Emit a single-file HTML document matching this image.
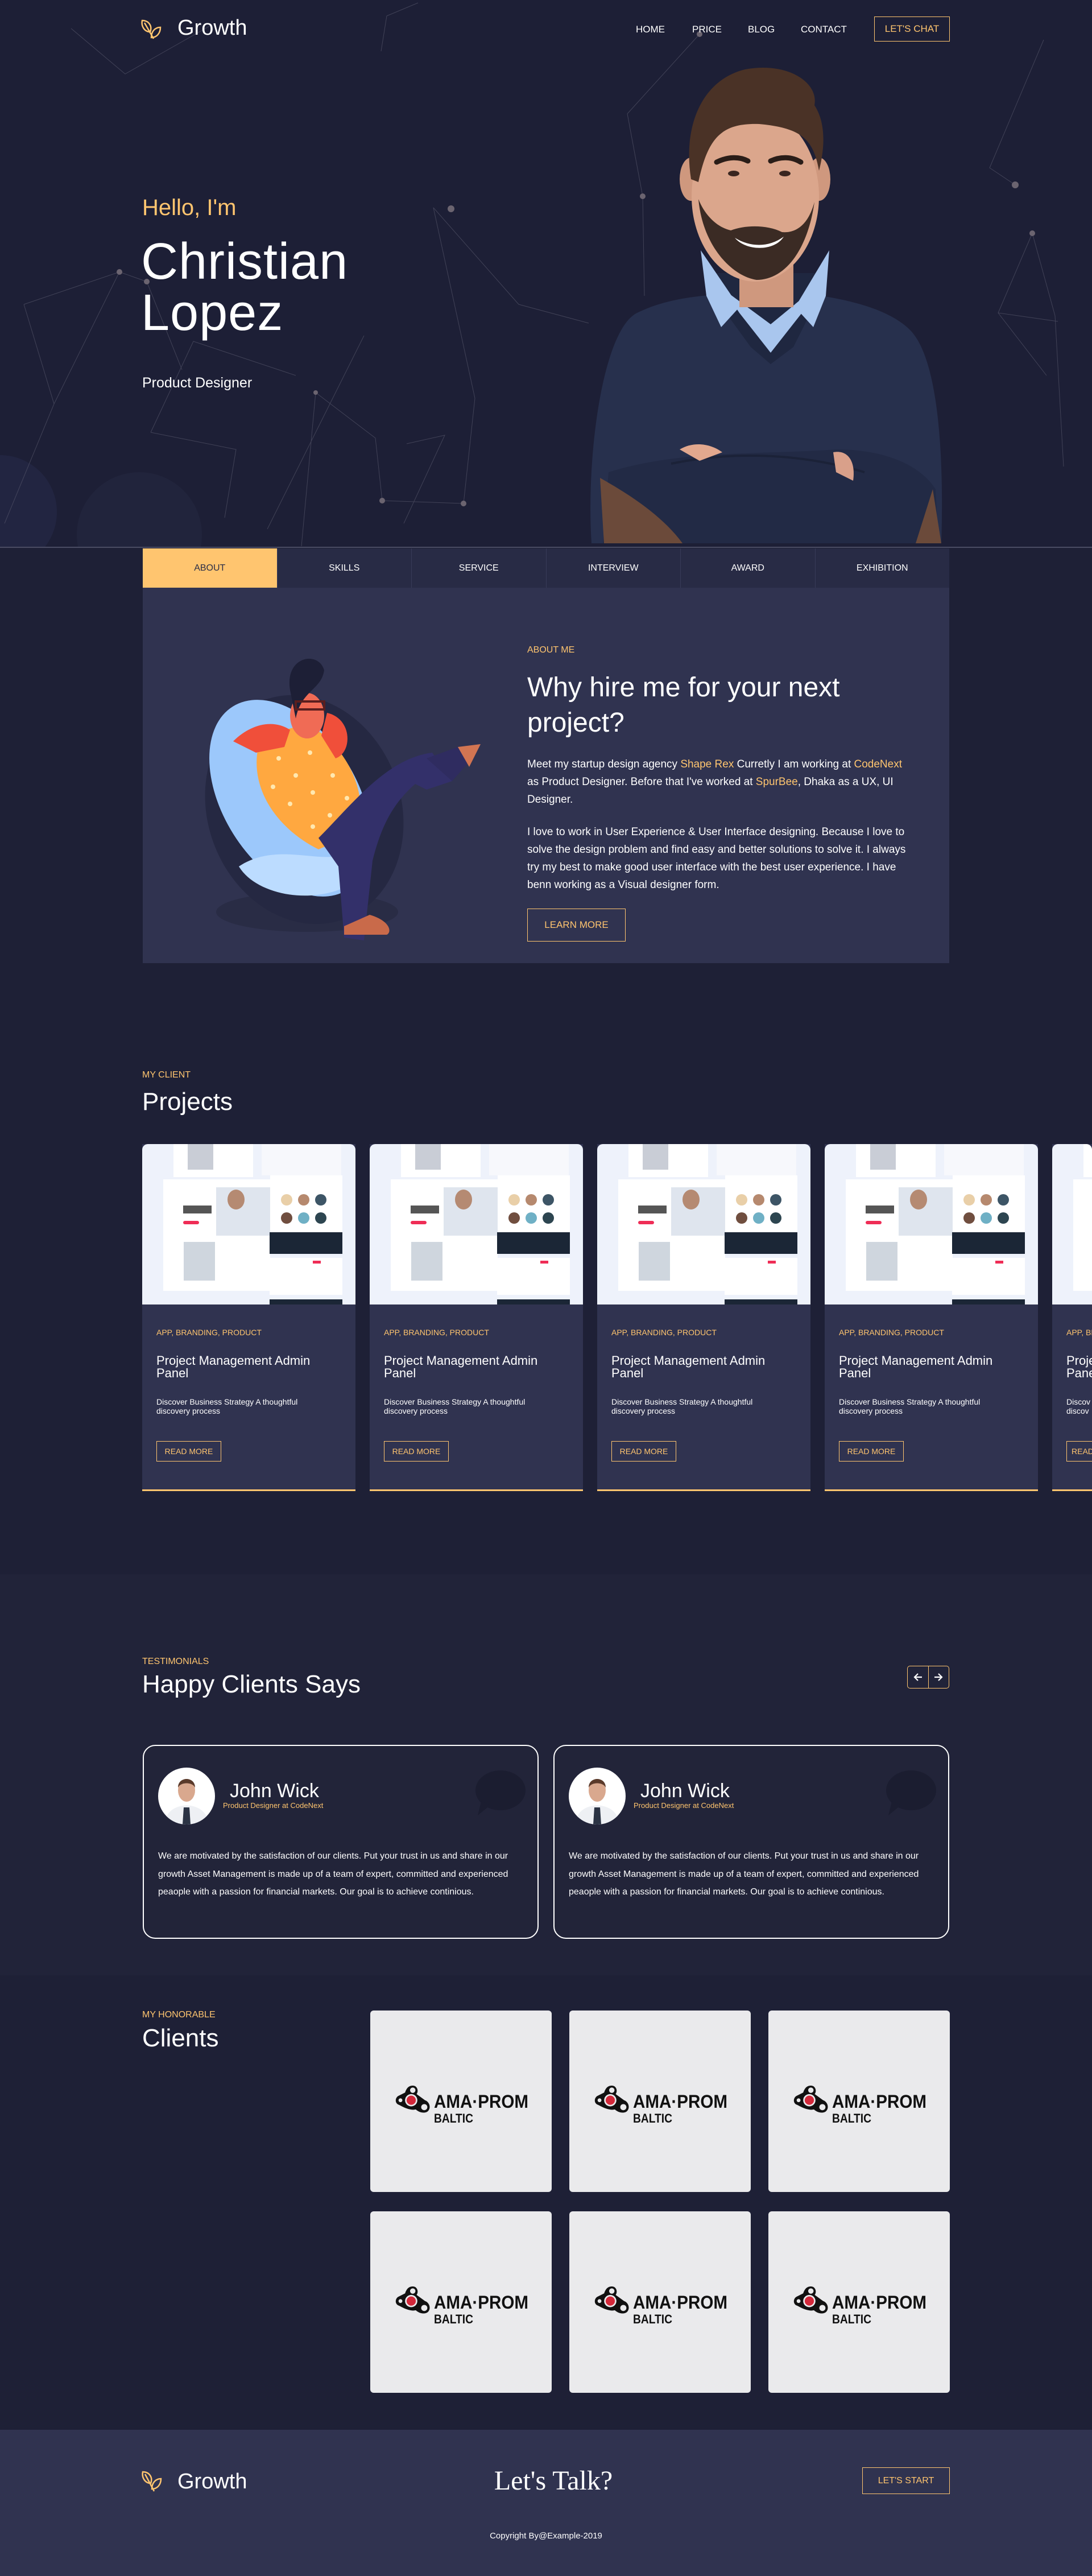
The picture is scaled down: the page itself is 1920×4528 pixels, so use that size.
<!DOCTYPE html>
<html><head><meta charset="utf-8"><style>
*{box-sizing:border-box;margin:0;padding:0}
html,body{width:1920px;height:4528px;overflow:hidden}
body{background:#1e2036;font-family:"Liberation Sans",Arial,sans-serif;color:#fff;position:relative}
#wrap{position:absolute;left:0;top:0;width:1920px;height:4528px;overflow:hidden}
.a{position:absolute}
.acc{color:#ffc56f}
.hero{left:0;top:0;width:1920px;height:963px;background:#1d1f36;border-bottom:2px solid #4a4c63;overflow:hidden}
.nav a{position:absolute;top:42px;font-size:17px;color:#fff;text-decoration:none}
.btn{position:absolute;border:1.5px solid #ffc56f;color:#ffc56f;display:flex;align-items:center;justify-content:center;font-size:17px}
.tabs{left:251px;top:964px;width:1418px;height:69px;display:flex;background:#282b45}
.tabs div{flex:1;display:flex;align-items:center;justify-content:center;font-size:16px;border-right:1px solid #383b58}
.panel{left:251px;top:1033px;width:1418px;height:660px;background:#303350}
.card{position:absolute;top:2011px;width:375px;height:610px;background:#303350;border-bottom:3px solid #ffc56f;overflow:hidden}
.thumb{position:absolute;left:0;top:0;width:375px;height:282px;background:#eef2fb;border-radius:10px 10px 0 0;overflow:hidden}
.thumb div{position:absolute}
.card .cat{position:absolute;left:25px;top:323px;font-size:14px;color:#ffc56f;white-space:nowrap}
.card .ti{position:absolute;left:25px;top:370px;font-size:22px;line-height:22px;width:330px}
.card .de{position:absolute;left:25px;top:445px;font-size:14px;line-height:16px;width:300px}
.card .rm{position:absolute;left:25px;top:522px;width:114px;height:36px;border:1.5px solid #ffc56f;color:#ffc56f;font-size:14px;display:flex;align-items:center;justify-content:center;white-space:nowrap}
.tcard{position:absolute;top:3067px;width:696px;height:341px;border:2px solid #fff;border-radius:22px;background:#222439}
.tile{position:absolute;width:319px;height:319px;background:#eaeaec;border-radius:6px}
</style></head><body><div id="wrap">

<div class="a hero">
<svg class="a" style="left:0;top:0" width="1920" height="963" viewBox="0 0 1920 963">
<circle cx="245" cy="940" r="110" fill="#24263f" opacity=".7"/>
<circle cx="0" cy="900" r="100" fill="#26294a" opacity=".6"/>
<g stroke="#5a5a6e" stroke-width="1" fill="none" opacity=".6">
<polyline points="125,50 220,130 370,45"/><polyline points="670,90 680,28 735,5"/>
<polyline points="42,535 210,478 258,495 320,650"/><polyline points="42,535 95,710 8,920"/><polyline points="210,478 95,710"/>
<polyline points="762,365 912,535 1035,568"/><polyline points="762,365 835,700 815,885"/>
<polyline points="555,690 660,770 672,880 815,885"/><polyline points="555,690 530,960"/>
<polyline points="1103,200 1130,345 1133,520"/><polyline points="1230,60 1103,200"/>
<polyline points="1835,70 1740,295 1785,325"/>
<polyline points="1815,410 1855,555 1870,820"/><polyline points="1815,410 1755,550 1860,565"/><polyline points="1755,550 1840,660"/>
<polyline points="265,760 415,790 395,910"/><polyline points="265,760 340,600 520,660"/>
<polyline points="715,780 782,765 710,920"/><polyline points="640,590 470,930"/>
</g>
<g fill="#6b6470"><circle cx="210" cy="478" r="5"/><circle cx="258" cy="495" r="5"/><circle cx="793" cy="367" r="6"/><circle cx="1230" cy="60" r="5"/><circle cx="1130" cy="345" r="5"/><circle cx="672" cy="880" r="5"/><circle cx="815" cy="885" r="5"/><circle cx="1785" cy="325" r="6"/><circle cx="1815" cy="410" r="5"/><circle cx="555" cy="690" r="4"/></g>
</svg>
<!-- person -->
<svg class="a" style="left:1000px;top:100px" width="700" height="863" viewBox="0 0 700 863">
<path d="M40 855 C30 700 60 480 120 450 C170 425 230 420 260 418 L430 418 C480 425 560 440 600 480 C650 530 660 700 655 855 Z" fill="#27304d"/>
<path d="M70 730 C200 690 330 700 470 690 C560 690 620 720 645 760 L650 855 L60 855 Z" fill="#222a45"/>
<path d="M180 715 C300 690 420 700 520 730" stroke="#1b2238" stroke-width="4" fill="none"/>
<path d="M55 740 C90 760 160 800 200 855 L62 855 Z" fill="#6b4a3a"/>
<path d="M640 760 L655 855 L610 855 Z" fill="#6b4a3a"/>
<path d="M195 690 C220 675 250 680 270 695 L230 710 Z" fill="#e2a88e"/>
<path d="M465 695 C490 690 505 710 500 745 L470 730 Z" fill="#d9a08a"/>
<path d="M240 380 L240 400 L320 510 L355 540 L395 510 L450 400 L450 380 Z" fill="#1f2740"/>
<path d="M240 360 L300 450 L355 520 L410 450 L450 360 L440 400 L355 470 L260 400 Z" fill="#a9c6ee"/>
<path d="M232 340 L300 440 L268 475 L242 420 Z M458 340 L398 440 L430 475 L452 420 Z" fill="#a9c6ee"/>
<rect x="300" y="330" width="95" height="110" fill="#cf987e"/>
<ellipse cx="215" cy="215" rx="20" ry="38" fill="#cf987e"/>
<ellipse cx="440" cy="215" rx="20" ry="38" fill="#cf987e"/>
<ellipse cx="328" cy="245" rx="112" ry="150" fill="#dba68c"/>
<path d="M228 250 C235 330 285 385 330 392 C380 392 420 340 432 255 C420 300 395 310 375 308 C350 295 310 295 285 305 C262 300 240 280 228 250 Z" fill="#3b2b24"/>
<path d="M292 318 C320 335 352 335 378 316 C362 342 312 342 292 318 Z" fill="#fff"/>
<path d="M215 215 C200 120 235 40 310 22 C385 8 440 45 432 85 C455 120 448 170 440 200 C430 145 410 125 335 118 C270 116 245 140 228 220 Z" fill="#4a3226"/>
<path d="M260 185 C280 175 300 175 315 183 M355 183 C372 175 392 175 408 185" stroke="#2a1d18" stroke-width="9" fill="none" stroke-linecap="round"/>
<ellipse cx="290" cy="205" rx="10" ry="5" fill="#3a2620"/><ellipse cx="380" cy="205" rx="10" ry="5" fill="#3a2620"/>
</svg>
<svg class="a" style="left:246px;top:32px" width="40" height="40" viewBox="0 0 40 40" fill="none" stroke="#ffc56f" stroke-width="2.5">
<path d="M4 4 C16 4 22 14 18 24 C8 24 2 14 4 4 Z"/><path d="M36 16 C36 26 30 34 20 34 C20 24 26 16 36 16 Z"/><path d="M8 8 L24 36"/>
</svg>
<div class="a" style="left:312px;top:28px;font-size:38px;color:#fff">Growth</div>
<div class="nav"><a style="left:1118px">HOME</a><a style="left:1217px">PRICE</a><a style="left:1315px">BLOG</a><a style="left:1408px">CONTACT</a></div>
<div class="btn" style="left:1537px;top:29px;width:133px;height:44px;font-size:17px">LET'S CHAT</div>
<div class="a acc" style="left:250px;top:343px;font-size:40px">Hello, I'm</div>
<div class="a" style="left:248px;top:415px;font-size:90px;line-height:90px;letter-spacing:1px">Christian<br>Lopez</div>
<div class="a" style="left:250px;top:659px;font-size:25px">Product Designer</div>
</div>

<div class="a tabs"><div style="background:#ffc56f;color:#2a2d47">ABOUT</div><div>SKILLS</div><div>SERVICE</div><div>INTERVIEW</div><div>AWARD</div><div style="border:none">EXHIBITION</div></div>
<div class="a panel">
<svg class="a" style="left:99px;top:100px" width="560" height="520" viewBox="0 0 560 520">
<ellipse cx="190" cy="470" rx="160" ry="35" fill="#292c45"/>
<ellipse cx="185" cy="290" rx="170" ry="205" transform="rotate(-20 185 290)" fill="#252842"/>
<ellipse cx="160" cy="270" rx="118" ry="190" transform="rotate(-32 160 270)" fill="#9cc8fb"/>
<path d="M70 390 C100 440 200 460 270 420 C290 395 270 370 240 372 C200 380 130 350 70 390 Z" fill="#bcdcff"/>
<path d="M110 160 C80 240 130 320 210 360 L280 330 C300 250 250 170 190 140 Z" fill="#ffa840"/>
<g fill="#ffe8b0"><circle cx="140" cy="200" r="4"/><circle cx="170" cy="230" r="4"/><circle cx="200" cy="260" r="4"/><circle cx="160" cy="280" r="4"/><circle cx="230" cy="300" r="4"/><circle cx="195" cy="190" r="4"/><circle cx="235" cy="230" r="4"/><circle cx="130" cy="250" r="4"/><circle cx="260" cy="270" r="4"/><circle cx="200" cy="320" r="4"/></g>
<path d="M210 340 C270 280 330 200 410 190 L445 240 L400 255 L380 245 C340 280 320 320 305 380 L290 520 L255 515 L245 390 Z" fill="#33306a"/>
<path d="M400 200 L445 240 L480 200 L455 180 Z" fill="#2f2c60"/>
<path d="M455 180 L495 175 L475 215 Z" fill="#d27552"/>
<path d="M255 495 L300 475 C335 485 340 505 330 510 L255 510 Z" fill="#c96a4a"/>
<path d="M60 170 C90 140 130 130 160 150 L150 180 L100 190 Z" fill="#f04f3a"/>
<path d="M225 120 C270 130 270 190 240 200 L215 160 Z" fill="#f04f3a"/>
<ellipse cx="190" cy="125" rx="30" ry="40" fill="#f06b55"/>
<path d="M160 80 C150 20 210 10 220 45 C215 80 180 80 170 130 Z" fill="#1d1f36"/>
<rect x="170" y="100" width="50" height="14" fill="none" stroke="#5a1e1e" stroke-width="4"/>
</svg>
<div class="a acc" style="left:676px;top:101px;font-size:16px">ABOUT ME</div>
<div class="a" style="left:676px;top:145px;font-size:48px;line-height:62px;width:640px">Why hire me for your next project?</div>
<div class="a" style="left:676px;top:295px;font-size:19px;line-height:31px;width:680px">Meet my startup design agency <span class="acc">Shape Rex</span> Curretly I am working at <span class="acc">CodeNext</span> as Product Designer. Before that I've worked at <span class="acc">SpurBee</span>, Dhaka as a UX, UI Designer.</div>
<div class="a" style="left:676px;top:414px;font-size:19px;line-height:31px;width:690px">I love to work in User Experience &amp; User Interface designing. Because I love to solve the design problem and find easy and better solutions to solve it. I always try my best to make good user interface with the best user experience. I have benn working as a Visual designer form.</div>
<div class="btn" style="left:676px;top:564px;width:173px;height:58px">LEARN MORE</div>
</div>

<div class="a acc" style="left:250px;top:1881px;font-size:16px">MY CLIENT</div>
<div class="a" style="left:250px;top:1912px;font-size:44px">Projects</div>

<div class="card" style="left:250px"><div class="thumb">
<div style="left:55px;top:0;width:140px;height:58px;background:#fff"></div><div style="left:80px;top:0;width:45px;height:45px;background:#c9cdd6"></div>
<div style="left:210px;top:0;width:140px;height:55px;background:#f7f8fc"></div>
<div style="left:37px;top:62px;width:188px;height:196px;background:#fff"></div><div style="left:130px;top:76px;width:95px;height:85px;background:#dfe5ee"></div><div style="left:150px;top:80px;width:30px;height:35px;border-radius:50%;background:#b58a72"></div><div style="left:72px;top:135px;width:28px;height:6px;background:#ef2d56;border-radius:3px"></div><div style="left:72px;top:108px;width:50px;height:14px;background:#555"></div>
<div style="left:73px;top:172px;width:55px;height:68px;background:#cfd6de"></div>
<div style="left:225px;top:55px;width:127px;height:100px;background:#fff"></div>
<div style="left:244px;top:88px;width:20px;height:20px;border-radius:50%;background:#e9cfa8"></div><div style="left:274px;top:88px;width:20px;height:20px;border-radius:50%;background:#b6896e"></div><div style="left:304px;top:88px;width:20px;height:20px;border-radius:50%;background:#3d5566"></div><div style="left:244px;top:120px;width:20px;height:20px;border-radius:50%;background:#704e3f"></div><div style="left:274px;top:120px;width:20px;height:20px;border-radius:50%;background:#6fb0c5"></div><div style="left:304px;top:120px;width:20px;height:20px;border-radius:50%;background:#2d4550"></div>
<div style="left:224px;top:155px;width:128px;height:38px;background:#1b2636"></div>
<div style="left:224px;top:200px;width:128px;height:65px;background:#fff"></div><div style="left:300px;top:205px;width:14px;height:5px;background:#ef2d56"></div>
<div style="left:224px;top:273px;width:128px;height:9px;background:#1b2636"></div>
</div><div class="cat">APP, BRANDING, PRODUCT</div><div class="ti">Project Management Admin Panel</div><div class="de">Discover Business Strategy A thoughtful discovery process</div><div class="rm">READ MORE</div></div>

<div class="card" style="left:650px"><div class="thumb">
<div style="left:55px;top:0;width:140px;height:58px;background:#fff"></div><div style="left:80px;top:0;width:45px;height:45px;background:#c9cdd6"></div>
<div style="left:210px;top:0;width:140px;height:55px;background:#f7f8fc"></div>
<div style="left:37px;top:62px;width:188px;height:196px;background:#fff"></div><div style="left:130px;top:76px;width:95px;height:85px;background:#dfe5ee"></div><div style="left:150px;top:80px;width:30px;height:35px;border-radius:50%;background:#b58a72"></div><div style="left:72px;top:135px;width:28px;height:6px;background:#ef2d56;border-radius:3px"></div><div style="left:72px;top:108px;width:50px;height:14px;background:#555"></div>
<div style="left:73px;top:172px;width:55px;height:68px;background:#cfd6de"></div>
<div style="left:225px;top:55px;width:127px;height:100px;background:#fff"></div>
<div style="left:244px;top:88px;width:20px;height:20px;border-radius:50%;background:#e9cfa8"></div><div style="left:274px;top:88px;width:20px;height:20px;border-radius:50%;background:#b6896e"></div><div style="left:304px;top:88px;width:20px;height:20px;border-radius:50%;background:#3d5566"></div><div style="left:244px;top:120px;width:20px;height:20px;border-radius:50%;background:#704e3f"></div><div style="left:274px;top:120px;width:20px;height:20px;border-radius:50%;background:#6fb0c5"></div><div style="left:304px;top:120px;width:20px;height:20px;border-radius:50%;background:#2d4550"></div>
<div style="left:224px;top:155px;width:128px;height:38px;background:#1b2636"></div>
<div style="left:224px;top:200px;width:128px;height:65px;background:#fff"></div><div style="left:300px;top:205px;width:14px;height:5px;background:#ef2d56"></div>
<div style="left:224px;top:273px;width:128px;height:9px;background:#1b2636"></div>
</div><div class="cat">APP, BRANDING, PRODUCT</div><div class="ti">Project Management Admin Panel</div><div class="de">Discover Business Strategy A thoughtful discovery process</div><div class="rm">READ MORE</div></div>

<div class="card" style="left:1050px"><div class="thumb">
<div style="left:55px;top:0;width:140px;height:58px;background:#fff"></div><div style="left:80px;top:0;width:45px;height:45px;background:#c9cdd6"></div>
<div style="left:210px;top:0;width:140px;height:55px;background:#f7f8fc"></div>
<div style="left:37px;top:62px;width:188px;height:196px;background:#fff"></div><div style="left:130px;top:76px;width:95px;height:85px;background:#dfe5ee"></div><div style="left:150px;top:80px;width:30px;height:35px;border-radius:50%;background:#b58a72"></div><div style="left:72px;top:135px;width:28px;height:6px;background:#ef2d56;border-radius:3px"></div><div style="left:72px;top:108px;width:50px;height:14px;background:#555"></div>
<div style="left:73px;top:172px;width:55px;height:68px;background:#cfd6de"></div>
<div style="left:225px;top:55px;width:127px;height:100px;background:#fff"></div>
<div style="left:244px;top:88px;width:20px;height:20px;border-radius:50%;background:#e9cfa8"></div><div style="left:274px;top:88px;width:20px;height:20px;border-radius:50%;background:#b6896e"></div><div style="left:304px;top:88px;width:20px;height:20px;border-radius:50%;background:#3d5566"></div><div style="left:244px;top:120px;width:20px;height:20px;border-radius:50%;background:#704e3f"></div><div style="left:274px;top:120px;width:20px;height:20px;border-radius:50%;background:#6fb0c5"></div><div style="left:304px;top:120px;width:20px;height:20px;border-radius:50%;background:#2d4550"></div>
<div style="left:224px;top:155px;width:128px;height:38px;background:#1b2636"></div>
<div style="left:224px;top:200px;width:128px;height:65px;background:#fff"></div><div style="left:300px;top:205px;width:14px;height:5px;background:#ef2d56"></div>
<div style="left:224px;top:273px;width:128px;height:9px;background:#1b2636"></div>
</div><div class="cat">APP, BRANDING, PRODUCT</div><div class="ti">Project Management Admin Panel</div><div class="de">Discover Business Strategy A thoughtful discovery process</div><div class="rm">READ MORE</div></div>

<div class="card" style="left:1450px"><div class="thumb">
<div style="left:55px;top:0;width:140px;height:58px;background:#fff"></div><div style="left:80px;top:0;width:45px;height:45px;background:#c9cdd6"></div>
<div style="left:210px;top:0;width:140px;height:55px;background:#f7f8fc"></div>
<div style="left:37px;top:62px;width:188px;height:196px;background:#fff"></div><div style="left:130px;top:76px;width:95px;height:85px;background:#dfe5ee"></div><div style="left:150px;top:80px;width:30px;height:35px;border-radius:50%;background:#b58a72"></div><div style="left:72px;top:135px;width:28px;height:6px;background:#ef2d56;border-radius:3px"></div><div style="left:72px;top:108px;width:50px;height:14px;background:#555"></div>
<div style="left:73px;top:172px;width:55px;height:68px;background:#cfd6de"></div>
<div style="left:225px;top:55px;width:127px;height:100px;background:#fff"></div>
<div style="left:244px;top:88px;width:20px;height:20px;border-radius:50%;background:#e9cfa8"></div><div style="left:274px;top:88px;width:20px;height:20px;border-radius:50%;background:#b6896e"></div><div style="left:304px;top:88px;width:20px;height:20px;border-radius:50%;background:#3d5566"></div><div style="left:244px;top:120px;width:20px;height:20px;border-radius:50%;background:#704e3f"></div><div style="left:274px;top:120px;width:20px;height:20px;border-radius:50%;background:#6fb0c5"></div><div style="left:304px;top:120px;width:20px;height:20px;border-radius:50%;background:#2d4550"></div>
<div style="left:224px;top:155px;width:128px;height:38px;background:#1b2636"></div>
<div style="left:224px;top:200px;width:128px;height:65px;background:#fff"></div><div style="left:300px;top:205px;width:14px;height:5px;background:#ef2d56"></div>
<div style="left:224px;top:273px;width:128px;height:9px;background:#1b2636"></div>
</div><div class="cat">APP, BRANDING, PRODUCT</div><div class="ti">Project Management Admin Panel</div><div class="de">Discover Business Strategy A thoughtful discovery process</div><div class="rm">READ MORE</div></div>

<div class="card" style="left:1850px;width:70px"><div class="thumb" style="width:70px">
<div style="left:55px;top:0;width:15px;height:58px;background:#fff"></div>
<div style="left:37px;top:62px;width:33px;height:196px;background:#fff"></div>
</div><div class="cat">APP, BRANDING, PRODUCT</div><div class="ti" style="width:45px;overflow:hidden;white-space:nowrap">Proje<br>Pane</div><div class="de" style="width:45px;overflow:hidden;white-space:nowrap">Discov<br>discov</div><div class="rm" style="width:45px;border-right:none;justify-content:flex-start;padding-left:8px;overflow:hidden">READ</div></div>

<!-- testimonials -->
<div class="a" style="left:0;top:2767px;width:1920px;height:705px;background:#212339"></div>
<div class="a acc" style="left:250px;top:2912px;font-size:16px">TESTIMONIALS</div>
<div class="a" style="left:250px;top:2936px;font-size:44px">Happy Clients Says</div>
<div class="a" style="left:1595px;top:2928px;width:74px;height:40px;border:1.5px solid #ffc56f;border-radius:5px;display:flex">
<div style="flex:1;border-right:1.5px solid #ffc56f;display:flex;align-items:center;justify-content:center"><svg width="18" height="18" viewBox="0 0 18 18" fill="none" stroke="#fff" stroke-width="2.2"><path d="M16 9H3M9 3L3 9l6 6"/></svg></div>
<div style="flex:1;display:flex;align-items:center;justify-content:center"><svg width="18" height="18" viewBox="0 0 18 18" fill="none" stroke="#fff" stroke-width="2.2"><path d="M2 9h13M9 3l6 6-6 6"/></svg></div>
</div>

<div class="tcard" style="left:251px">
<svg class="a" style="left:25px;top:38px" width="100" height="100" viewBox="0 0 100 100"><clipPath id="c1"><ellipse cx="50" cy="50" rx="50" ry="50"/></clipPath><g clip-path="url(#c1)"><rect width="100" height="100" fill="#fff"/><path d="M10 100 C15 75 30 68 50 66 C70 68 85 75 90 100 Z" fill="#eef0f4"/><path d="M45 70 L55 70 L57 100 L43 100 Z" fill="#2b3344"/><ellipse cx="50" cy="40" rx="15" ry="20" fill="#d9a88e"/><path d="M35 35 C35 15 65 15 65 35 C60 25 40 25 35 35Z" fill="#5a3a2a"/></g></svg>
<div class="a" style="left:151px;top:60px;font-size:34px">John Wick</div>
<div class="a acc" style="left:139px;top:97px;font-size:13px">Product Designer at CodeNext</div>
<svg class="a" style="left:579px;top:42px" width="92" height="80" viewBox="0 0 92 80"><ellipse cx="48" cy="36" rx="44" ry="35" fill="#1b1d30"/><path d="M8 80 L14 55 L30 62 Z" fill="#1b1d30"/></svg>
<div class="a" style="left:25px;top:178px;width:630px;font-size:16px;line-height:31.5px">We are motivated by the satisfaction of our clients. Put your trust in us and share in our growth Asset Management is made up of a team of expert, committed and experienced peaople with a passion for financial markets. Our goal is to achieve continious.</div>
</div>
<div class="tcard" style="left:973px">
<svg class="a" style="left:25px;top:38px" width="100" height="100" viewBox="0 0 100 100"><clipPath id="c2"><ellipse cx="50" cy="50" rx="50" ry="50"/></clipPath><g clip-path="url(#c2)"><rect width="100" height="100" fill="#fff"/><path d="M10 100 C15 75 30 68 50 66 C70 68 85 75 90 100 Z" fill="#eef0f4"/><path d="M45 70 L55 70 L57 100 L43 100 Z" fill="#2b3344"/><ellipse cx="50" cy="40" rx="15" ry="20" fill="#d9a88e"/><path d="M35 35 C35 15 65 15 65 35 C60 25 40 25 35 35Z" fill="#5a3a2a"/></g></svg>
<div class="a" style="left:151px;top:60px;font-size:34px">John Wick</div>
<div class="a acc" style="left:139px;top:97px;font-size:13px">Product Designer at CodeNext</div>
<svg class="a" style="left:579px;top:42px" width="92" height="80" viewBox="0 0 92 80"><ellipse cx="48" cy="36" rx="44" ry="35" fill="#1b1d30"/><path d="M8 80 L14 55 L30 62 Z" fill="#1b1d30"/></svg>
<div class="a" style="left:25px;top:178px;width:630px;font-size:16px;line-height:31.5px">We are motivated by the satisfaction of our clients. Put your trust in us and share in our growth Asset Management is made up of a team of expert, committed and experienced peaople with a passion for financial markets. Our goal is to achieve continious.</div>
</div>

<!-- clients -->
<div class="a acc" style="left:250px;top:3533px;font-size:16px">MY HONORABLE</div>
<div class="a" style="left:250px;top:3558px;font-size:44px">Clients</div>

<div class="tile" style="left:651px;top:3534px"></div>
<div class="tile" style="left:1001px;top:3534px"></div>
<div class="tile" style="left:1351px;top:3534px"></div>
<div class="tile" style="left:651px;top:3887px"></div>
<div class="tile" style="left:1001px;top:3887px"></div>
<div class="tile" style="left:1351px;top:3887px"></div>

<svg class="a" style="left:0;top:0" width="1920" height="4528" viewBox="0 0 1920 4528">
<defs><g id="lg">
<g transform="scale(1.35)">
<path d="M22 3 C28 3 30 10 27 14 L38 22 C44 24 46 32 42 36 C38 40 30 38 26 34 C18 36 8 30 4 28 C-2 26 -1 18 4 16 L12 12 C14 6 17 3 22 3 Z" fill="#111"/>
<circle cx="22" cy="9" r="3.5" fill="#eaeaec"/><circle cx="37" cy="31" r="4" fill="#eaeaec"/><circle cx="6" cy="22" r="2.5" fill="#eaeaec"/>
<circle cx="20" cy="22" r="8" fill="#eaeaec"/><circle cx="20" cy="22" r="6" fill="#d3283a"/>
</g>
<text x="67" y="43" font-family="Liberation Sans,sans-serif" font-weight="bold" font-size="32" fill="#111" textLength="166" lengthAdjust="spacingAndGlyphs">AMA·PROM</text>
<text x="67" y="69" font-family="Liberation Sans,sans-serif" font-weight="bold" font-size="22" fill="#111" textLength="69" lengthAdjust="spacingAndGlyphs">BALTIC</text>
</g></defs>
<use href="#lg" x="696" y="3662"/><use href="#lg" x="1046" y="3662"/><use href="#lg" x="1396" y="3662"/>
<use href="#lg" x="696" y="4015"/><use href="#lg" x="1046" y="4015"/><use href="#lg" x="1396" y="4015"/>
</svg>

<!-- footer -->
<div class="a" style="left:0;top:4271px;width:1920px;height:257px;background:#303350">
<svg class="a" style="left:247px;top:70px" width="40" height="42" viewBox="0 0 40 42" fill="none" stroke="#ffc56f" stroke-width="2.5">
<path d="M4 4 C16 4 22 14 18 24 C8 24 2 14 4 4 Z"/><path d="M36 16 C36 26 30 34 20 34 C20 24 26 16 36 16 Z"/><path d="M8 8 L24 38"/>
</svg>
<div class="a" style="left:312px;top:70px;font-size:38px">Growth</div>
<div class="a" style="left:0;width:1946px;top:62px;text-align:center;font-family:'Liberation Serif',serif;font-size:48px">Let's Talk?</div>
<div class="btn" style="left:1516px;top:66px;width:154px;height:47px;font-size:16px">LET'S START</div>
<div class="a" style="left:0;width:1920px;top:178px;text-align:center;font-size:15px">Copyright By@Example-2019</div>
</div>
</div></body></html>
